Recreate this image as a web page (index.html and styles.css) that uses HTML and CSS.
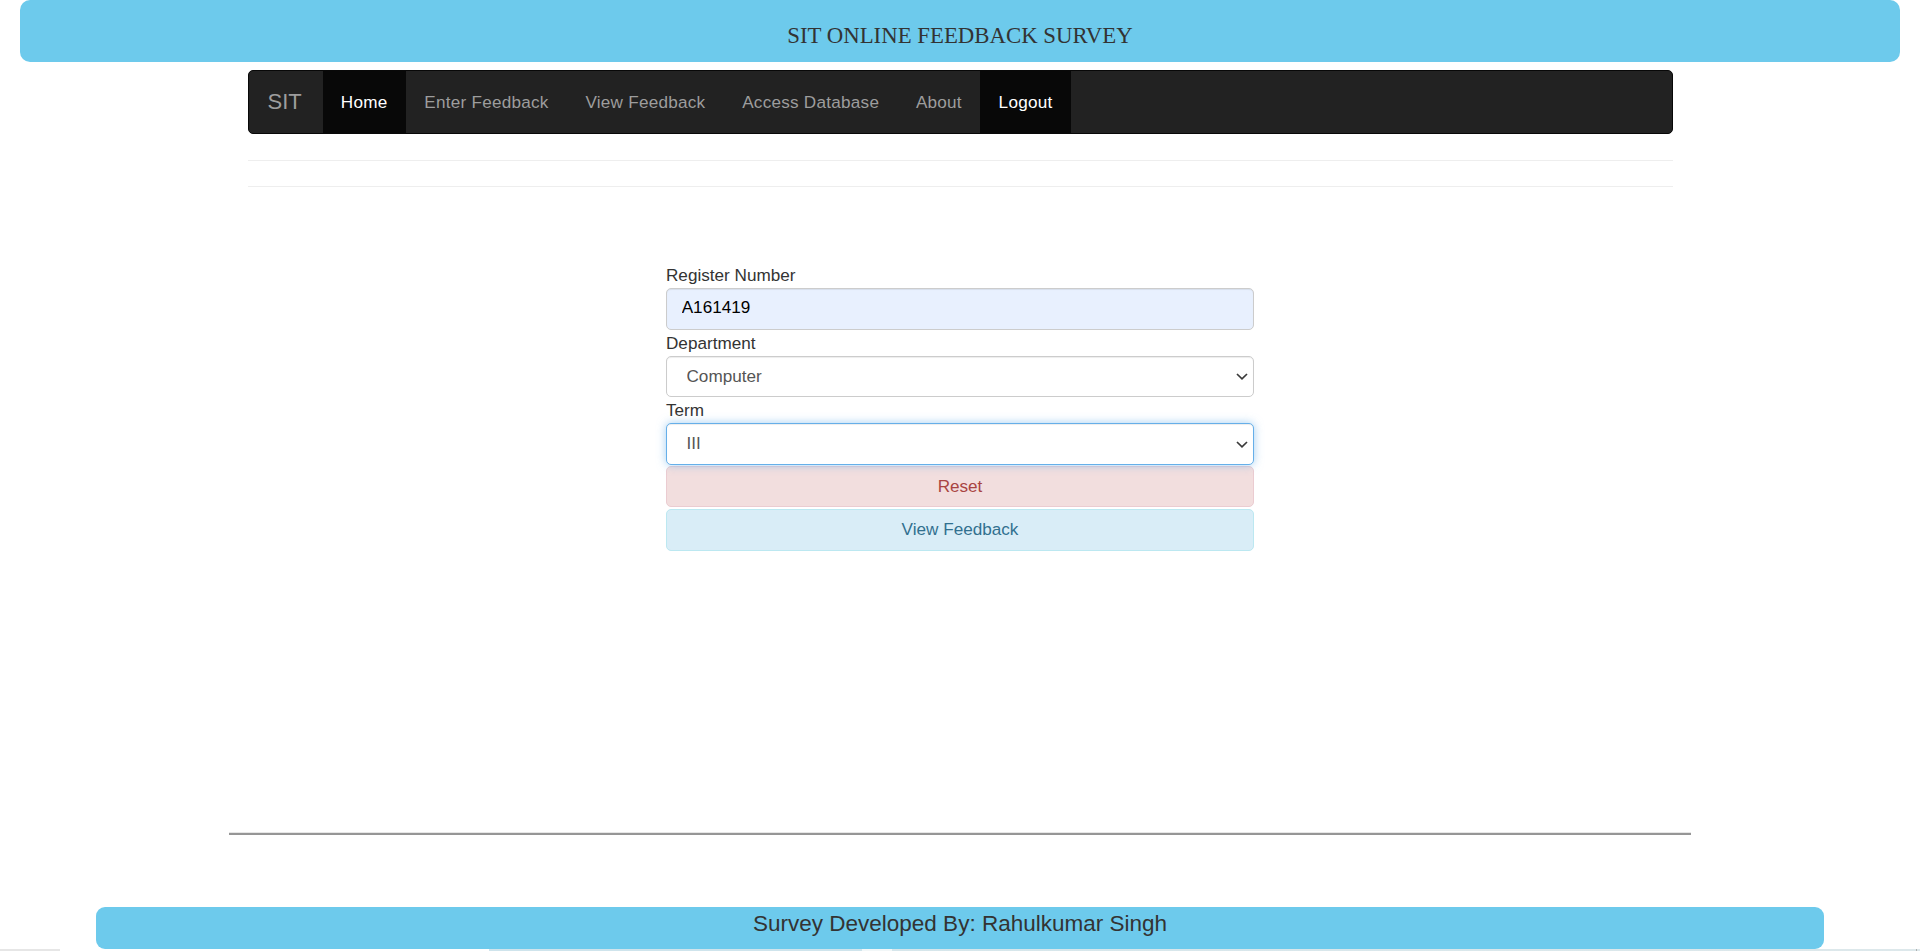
FILE: index.html
```html
<!DOCTYPE html>
<html lang="en">
<head>
<meta charset="utf-8">
<title>SIT Online Feedback Survey</title>
<link rel="stylesheet" href="styles.css">
</head>
<body>
<header class="topbar">SIT ONLINE FEEDBACK SURVEY</header>

<nav class="navbar">
  <a class="brand" href="#">SIT</a>
  <ul class="nav">
    <li class="active"><a href="#">Home</a></li>
    <li><a href="#">Enter Feedback</a></li>
    <li><a href="#">View Feedback</a></li>
    <li><a href="#">Access Database</a></li>
    <li><a href="#">About</a></li>
    <li class="active"><a href="#">Logout</a></li>
  </ul>
</nav>

<div class="rule rule-first"></div>
<div class="rule rule-second"></div>

<form class="feedback-form">
  <label for="reg">Register Number</label>
  <input id="reg" class="control autofill" type="text" value="A161419">

  <label for="dept">Department</label>
  <div class="select-wrap">
    <select id="dept" class="control select">
      <option>Computer</option>
    </select>
    <svg class="chevron" viewBox="0 0 12 7" width="12" height="7" aria-hidden="true"><path d="M1 1 L6 5.8 L11 1" fill="none" stroke="#3a3a3a" stroke-width="1.7"/></svg>
  </div>

  <label for="term">Term</label>
  <div class="select-wrap">
    <select id="term" class="control select focused">
      <option>III</option>
    </select>
    <svg class="chevron" viewBox="0 0 12 7" width="12" height="7" aria-hidden="true"><path d="M1 1 L6 5.8 L11 1" fill="none" stroke="#3a3a3a" stroke-width="1.7"/></svg>
  </div>

  <button type="reset" class="btn btn-reset">Reset</button>
  <button type="button" class="btn btn-view">View Feedback</button>
</form>

<div class="footer-rule"></div>

<footer class="footer">Survey Developed By: Rahulkumar Singh</footer>
<div class="bottom-strip"></div>
</body>
</html>
```

FILE: styles.css
```css
html, body {
  margin: 0;
  padding: 0;
  height: 951px;
  overflow: hidden;
  background: #ffffff;
}

body {
  font-family: "Liberation Sans", Arial, sans-serif;
  font-size: 17.14px;
  color: #333333;
}

.topbar {
  box-sizing: border-box;
  height: 62px;
  margin: 0 20px;
  padding-top: 23px;
  line-height: 25px;
  background: #6dcaec;
  border-radius: 10px;
  text-align: center;
  font-family: "Liberation Serif", "Times New Roman", serif;
  font-size: 22.8px;
  color: #333333;
}

.navbar {
  box-sizing: border-box;
  width: 1425px;
  height: 64px;
  margin: 8px auto 0;
  background: #222222;
  border: 1px solid #080808;
  border-radius: 5px;
  display: flex;
  align-items: stretch;
}

.brand {
  box-sizing: border-box;
  width: 74px;
  padding-left: 19px;
  line-height: 62px;
  font-size: 22.04px;
  color: #9d9d9d;
  text-decoration: none;
}

.nav {
  list-style: none;
  margin: 0;
  padding: 0;
  display: flex;
}

.nav li a {
  display: block;
  padding: 0 18.37px;
  line-height: 62px;
  color: #9d9d9d;
  text-decoration: none;
  letter-spacing: 0.25px;
}

.nav li.active a {
  background: #080808;
  color: #ffffff;
}

.rule {
  width: 1425px;
  margin: 0 auto;
  border-top: 1px solid #eeeeee;
}

.rule-first {
  margin-top: 26px;
}

.rule-second {
  margin-top: 25px;
}

.feedback-form {
  width: 588px;
  margin: 75px auto 0;
  display: flex;
  flex-direction: column;
}

.feedback-form label {
  display: block;
  height: 26px;
  line-height: 26px;
  color: #333333;
}

.control {
  box-sizing: border-box;
  display: block;
  width: 100%;
  height: 41.5px;
  margin: 0;
  padding: 0 14.7px;
  font-family: "Liberation Sans", Arial, sans-serif;
  font-size: 17.14px;
  color: #555555;
  background: #ffffff;
  border: 1px solid #cccccc;
  border-radius: 5px;
  box-shadow: inset 0 1px 1px rgba(0, 0, 0, 0.075);
  outline: none;
}

.autofill {
  background: #e8f0fe;
  color: #000000;
  padding-bottom: 3px;
}

.select-wrap {
  position: relative;
}

.select {
  -webkit-appearance: none;
  appearance: none;
  padding-left: 19.5px;
  padding-bottom: 1px;
}

.select.focused {
  border-color: #66afe9;
  box-shadow: inset 0 1px 1px rgba(0, 0, 0, 0.075), 0 0 10px rgba(102, 175, 233, 0.6);
}

.chevron {
  position: absolute;
  right: 6px;
  top: 50%;
  margin-top: -3px;
  pointer-events: none;
}

.btn {
  box-sizing: border-box;
  display: block;
  width: 100%;
  height: 41.5px;
  margin: 0;
  padding: 0 14.7px;
  font-family: "Liberation Sans", Arial, sans-serif;
  font-size: 17.14px;
  text-align: center;
  border-radius: 5px;
  border: 1px solid transparent;
  cursor: pointer;
}

.btn-reset {
  margin-top: 1px;
  background: #f2dede;
  border-color: #ebccd1;
  color: #a94442;
}

.btn-view {
  margin-top: 2px;
  background: #d9edf7;
  border-color: #bce8f1;
  color: #31708f;
}

.footer-rule {
  box-sizing: border-box;
  width: 1462px;
  height: 3px;
  margin: 281px auto 0;
  border-top: 1px solid #e6e6e6;
  background: #969696;
}

.footer {
  box-sizing: border-box;
  width: 1728px;
  height: 42.5px;
  margin: 72px auto 0;
  background: #6dcaec;
  border-radius: 9px;
  text-align: center;
  line-height: 33px;
  font-size: 22.5px;
  color: #333333;
}

.bottom-strip {
  height: 2px;
  background: linear-gradient(to right,
    #e6e6e6 0, #e6e6e6 60px,
    #ffffff 60px, #ffffff 489px,
    #cfe4ec 489px, #cfe4ec 862px,
    #f2f7f8 862px, #f2f7f8 892px,
    #d6e6eb 892px, #dde8eb 1916px,
    #b0b0b0 1916px, #b0b0b0 1917px,
    #dde8eb 1917px);
}
```
